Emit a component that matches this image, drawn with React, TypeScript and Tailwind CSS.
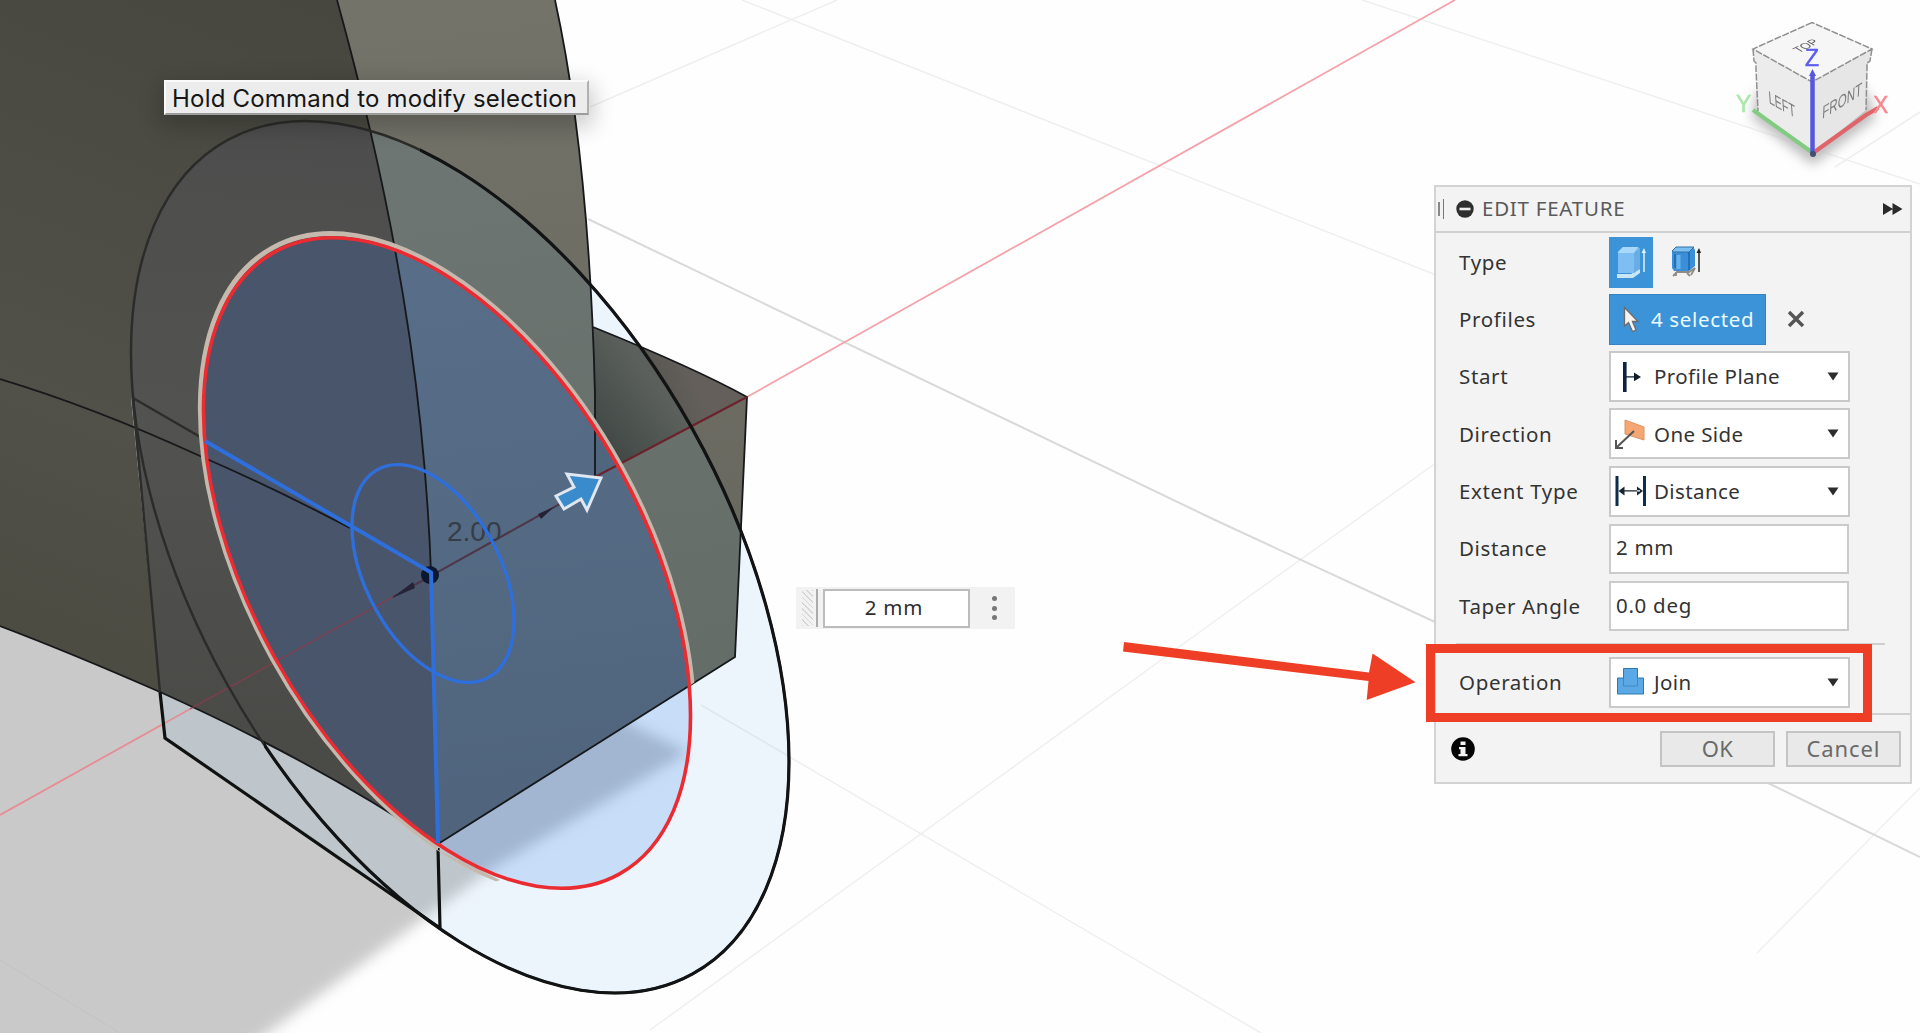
import React from "react";

type Palette = {
  ground: string;
  shadow: string;
  side: string;
  front: string;
  frontTop: string;
  box: string;
};

const plain: Palette = { ground: "none", shadow: "#c9c9c9", side: "url(#sideFill)", front: "#64645c", frontTop: "#737369", box: "url(#boxWarm)" };
const outer: Palette = { ground: "#edf5fc", shadow: "#bec6cb", side: "url(#sideOuter)", front: "#636b66", frontTop: "#6f7875", box: "url(#boxCool)" };
const inner: Palette = { ground: "#c7ddf8", shadow: "#a2b6d1", side: "#48556b", front: "#50657d", frontTop: "#5c718d", box: "#50667f" };

const SIDE = "M0 0H337C368 112 394 230 410 340C420 410 428 490 431 573L438 844C340 778 240 728 160 692C110 670 50 645 0 626Z";
const FRONT = "M337 0H555C578 105 591 240 595 393L595 477L747 397L735 657L438 844L431 573C428 490 420 410 410 340C394 230 368 112 337 0Z";
const BOX = "M593 327C640 346 700 371 747 397L595 477Z";
const OUTER_MATRIX = "matrix(329 204.5 0 385 460 557)";
const INNER_MATRIX = "matrix(243.5 153 0 287 447 563)";

function Solid({ p, id }: { p: Palette; id: string }) {
  return (
    <g>
      <linearGradient id={id} gradientUnits="userSpaceOnUse" x1="450" y1="0" x2="560" y2="800">
        <stop offset="0" stopColor={p.frontTop} />
        <stop offset="1" stopColor={p.front} />
      </linearGradient>
      <rect width="1920" height="1033" fill={p.ground} />
      <path d="M-60 560H400L630 724L688 752L496 866L416 924L258 1040L180 1100H-60Z" fill={p.shadow} filter="url(#soft)" />
      <path d={FRONT} fill={`url(#${id})`} />
      <path d={BOX} fill={p.box} />
      <path d={SIDE} fill={p.side} />
    </g>
  );
}

function Viewport() {
  return (
    <svg className="absolute inset-0 h-full w-full" viewBox="0 0 1920 1033" fill="none">
      <defs>
        <filter id="soft" x="-10%" y="-10%" width="120%" height="120%"><feGaussianBlur stdDeviation="7" /></filter>
        <linearGradient id="sideFill" gradientUnits="userSpaceOnUse" x1="300" y1="0" x2="60" y2="620">
          <stop offset="0" stopColor="#474740" /><stop offset="0.7" stopColor="#515149" /><stop offset="1" stopColor="#4c4c43" />
        </linearGradient>
        <linearGradient id="sideOuter" gradientUnits="userSpaceOnUse" x1="300" y1="120" x2="260" y2="740">
          <stop offset="0" stopColor="#4d4d4d" /><stop offset="0.5" stopColor="#525250" /><stop offset="1" stopColor="#4a4a47" />
        </linearGradient>
        <linearGradient id="boxWarm" gradientUnits="userSpaceOnUse" x1="595" y1="430" x2="700" y2="390">
          <stop offset="0" stopColor="#454a46" /><stop offset="1" stopColor="#645f5a" />
        </linearGradient>
        <linearGradient id="boxCool" gradientUnits="userSpaceOnUse" x1="595" y1="440" x2="660" y2="390">
          <stop offset="0" stopColor="#3f4744" /><stop offset="1" stopColor="#5b605c" />
        </linearGradient>
        <clipPath id="outerClip">
          <circle r="1" transform={OUTER_MATRIX} />
          <path d="M131 398L165 738L440 928L438 500Z" />
        </clipPath>
        <clipPath id="innerClip"><circle r="1" transform={INNER_MATRIX} /></clipPath>
        <clipPath id="bodyClip"><path d={SIDE} /><path d={FRONT} /><path d="M593 327L747 397L595 477ZM200 600H438V850L500 880L400 920L200 800Z" /></clipPath>
        <clipPath id="nearSide"><path d="M420 100H900V1033H264V742L420 842Z" /></clipPath>
      </defs>

      {/* ground grid */}
      <g stroke="#efefef" strokeWidth="1.5">
        <path d="M742 0L1436 275M1362 0L1920 184M837 0L590 107M701 705L1261 1033M650 1030L1244 600L1436 463M1835 167L1920 112M1920 788L1757 953" />
      </g>
      <path d="M588 219L1215 520L1435 622M1768 783L1920 857" stroke="#d9d9d9" strokeWidth="2" />
      <Solid p={plain} id="frontPlain" />
      <path d="M0 960L120 1033" stroke="#c2c2c2" strokeWidth="1" />
      <path d="M0 815L165 723M747 397L1455 0" stroke="#f4a3aa" strokeWidth="1.8" />
      <g clipPath="url(#outerClip)"><Solid p={outer} id="frontOuter" /></g>
      <g clipPath="url(#innerClip)"><Solid p={inner} id="frontInner" /></g>
      <path d="M701 705L790 757" stroke="#dfe7ee" strokeWidth="1.5" />

      {/* model edges */}
      <g stroke="#16181b" strokeWidth="1.8">
        <path d="M337 0C368 112 394 230 410 340C420 410 428 490 431 573" />
        <path d="M555 0C578 105 591 240 595 393L595 477M593 327C640 346 700 371 747 397L735 657L438 844" />
        <path d="M0 626C50 645 110 670 160 692C240 728 340 778 438 844" />
        <path d="M0 379C80 403 150 433 200 456C260 482 310 507 350 528" />
      </g>

      {/* axis through the solid */}
      <path d="M595 477L747 397" stroke="#6b232b" strokeWidth="2" />
      <path d="M0 815L190 709" stroke="#e08f96" strokeWidth="1.6" />
      <path d="M190 709L393 597" stroke="#8d3a4c" strokeOpacity="0.7" strokeWidth="1.6" />
      <path d="M393 597L601 481" stroke="#4e3547" strokeWidth="2" />
      <path d="M392 598L413 582L415 588ZM554 507L538 514L541 519Z" fill="#252238" />

      {/* sketch outlines */}
      <circle r="1" transform={OUTER_MATRIX} stroke="#2b2b29" strokeWidth="2.4" vectorEffect="non-scaling-stroke" />
      <g clipPath="url(#nearSide)">
        <circle r="1" transform={OUTER_MATRIX} stroke="#111314" strokeWidth="3.2" vectorEffect="non-scaling-stroke" />
      </g>
      <path d="M133 398L160 692M133 398L202 438" stroke="#2c2c2a" strokeWidth="2.4" />
      <path d="M160 692L165 738L440 928L438 848" stroke="#101212" strokeWidth="3.2" />
      <g clipPath="url(#bodyClip)">
        <circle r="1.013" transform={INNER_MATRIX} stroke="#c5b8ad" strokeWidth="5" vectorEffect="non-scaling-stroke" />
      </g>
      <circle r="1" transform={INNER_MATRIX} stroke="#ea2b31" strokeWidth="3.6" vectorEffect="non-scaling-stroke" />
      <text x="447" y="541" fontSize="28" fill="#343d49" className="font-['Liberation_Sans']">2.00</text>
      <circle cx="430" cy="575" r="9" fill="#0c1830" />
      <g stroke="#2f6fdc">
        <circle r="1" transform="matrix(81 47.5 0 98 433 573.5)" strokeWidth="3.4" vectorEffect="non-scaling-stroke" />
        <path d="M205 441L432 573" strokeWidth="4" />
        <path d="M431 572L438 843" strokeWidth="4" />
      </g>
      <path d="M601 478L587 510L581 499L564 509L556 496L574 487L567 474Z" fill="#3a8bcb" stroke="#dfe7f0" strokeWidth="3" />

      {/* callout arrow */}
      <path d="M1124 642L1369 672.5L1372.6 653.5L1415.5 682.3L1366.7 700L1368.5 681L1123 651.5Z" fill="#ee3f26" />
    </svg>
  );
}

function ViewCube() {
  return (
    <svg className="absolute left-[1730px] top-0 h-[180px] w-[170px]" viewBox="1730 0 170 180" fill="none">
      <defs>
        <filter id="haze" x="-30%" y="-30%" width="160%" height="160%"><feGaussianBlur stdDeviation="6" /></filter>
        <filter id="smooth" x="-10%" y="-10%" width="120%" height="120%"><feGaussianBlur stdDeviation="0.7" /></filter>
      </defs>
      <path d="M1752 118L1813 165L1876 118L1866 90H1758Z" fill="#bdbdbd" filter="url(#haze)" />
      <g filter="url(#smooth)">
        <path d="M1753 49L1754 62L1757 65L1758 111L1812 154V82Z" fill="#ececec" />
        <path d="M1872 49L1870 62L1867 65L1866 110L1812 154V82Z" fill="#e6e6e6" />
        <path d="M1812 22.5L1753 49L1812 82L1872 49Z" fill="#f6f6f6" />
        <path d="M1812 22.5L1753 49L1812 82L1872 49ZM1753 49L1754 61L1756 63V69L1758 111M1872 49L1870 61L1867 63V69L1866 110" stroke="#8f8f8f" strokeWidth="1.5" strokeDasharray="7 1.5" />
        <g className="font-['Liberation_Sans']" fill="#7c7c7c" fontSize="17">
          <text transform="matrix(.64 .36 .08 1.05 1769 103)">LEFT</text>
          <text transform="matrix(.68 -.42 -.05 1.05 1822 119)">FRONT</text>
          <text transform="matrix(.6 -.3 .6 .35 1799 53)" fill="#5e5e5e">TOP</text>
        </g>
        <path d="M1813 153L1866 115L1878 108" stroke="#e0656b" strokeWidth="4" />
        <path d="M1813 153L1753 110" stroke="#82cc82" strokeWidth="4" />
        <path d="M1812.5 154V74" stroke="#5656df" strokeWidth="4.5" />
        <path d="M1809 76L1812.5 69L1816 76Z" fill="#5656df" />
        <circle cx="1813" cy="154" r="3" fill="#45506a" />
        <g className="font-['Liberation_Sans']" fontSize="23" strokeWidth="0.5">
          <text x="1805" y="66" fill="#5c5cf0" stroke="#5c5cf0">Z</text>
          <text x="1736" y="112" fill="#a9e8a9" stroke="#a9e8a9">Y</text>
          <text x="1873" y="113" fill="#f58a8f" stroke="#f58a8f">X</text>
        </g>
      </g>
    </svg>
  );
}

function ExtrudeIcon({ thin }: { thin?: boolean }) {
  return (
    <svg className="h-[32px] w-[30px]" viewBox="0 0 30 32" fill="none">
      {thin ? (
        <>
          <path d="M2 30L6 26H18L24 22L20 29M5 26V30M16 27L19 30" stroke="#918b87" strokeWidth="1.8" />
          <path d="M1 5L5 1H22L24 4V20L18 25H3L1 22Z" fill="#3a8fd8" />
          <path d="M1 5L5 1H23L18 6H2Z" fill="#7cc0f1" stroke="#2f70a8" />
          <path d="M4 8V22M18 6V24" stroke="#1c67ab" strokeWidth="1.5" />
          <path d="M7.500 9V23" stroke="#68b1ec" strokeWidth="4" />
          <path d="M28 5V26" stroke="#222" strokeWidth="1.5" /><path d="M25.5 7L28 2L30 7Z" fill="#222" />
        </>
      ) : (
        <>
          <path d="M1 28H15L24 23V27L17 32H1Z" fill="#c8e6f5" />
          <path d="M2 6L7 1H22L24 3V22L18 27H2Z" fill="#7dbff2" />
          <path d="M2 6L7 1H22L18 7H2Z" fill="#a8d9fb" />
          <path d="M18 7L24 2V22L18 27Z" fill="#68ade6" />
          <path d="M28 5V26" stroke="#dff3ff" strokeWidth="1.5" /><path d="M25.5 7L28 2L30 7Z" fill="#dff3ff" />
        </>
      )}
    </svg>
  );
}

function StartIcon() {
  return (
    <svg className="h-[32px] w-[32px]" viewBox="0 0 32 32">
      <path d="M8 1h3.6v30H8z" fill="#0e2340" /><path d="M11 15.2h9v1.4h-9zM19 11.5l7 4.4-7 4.4z" fill="#111c2b" />
    </svg>
  );
}
function DirectionIcon() {
  return (
    <svg className="h-[32px] w-[32px]" viewBox="0 0 32 32" fill="none">
      <path d="M10 2L29 9V22L10 16Z" fill="#f4a673" stroke="#dd9260" />
      <path d="M19 13L2 29M1 22V30H8" stroke="#555" strokeWidth="2" />
    </svg>
  );
}
function ExtentIcon() {
  return (
    <svg className="h-[32px] w-[32px]" viewBox="0 0 32 32">
      <path d="M0.500 1h3v30h-3zM28 1h3v30h-3z" fill="#0e2f4b" />
      <path d="M7 15.200h18v1.400H7zM3.500 16l6-4.500v9zM28 16l-6-4.500v9z" fill="#1a2430" />
    </svg>
  );
}
function JoinIcon() {
  return (
    <svg className="h-[32px] w-[32px]" viewBox="0 0 32 32" fill="none">
      <path d="M8.500 2.500H22.500V12H28.500V28H2.500V12H8.500Z" fill="#5aa9e6" stroke="#2f78b2" />
      <path d="M8.500 12V20H22.500V12" stroke="#3b8ac6" />
    </svg>
  );
}

function Label({ children }: { children: React.ReactNode }) {
  return <div className="w-[150px] shrink-0 whitespace-nowrap tracking-[0.65px]">{children}</div>;
}

function Combo({ icon, text }: { icon: React.ReactNode; text: string }) {
  return (
    <div className="flex h-full w-[241px] items-center border-2 border-[#c9c9c9] bg-white pl-[4px] pr-[9px]">
      {icon}
      <span className="ml-[7px] flex-1 whitespace-nowrap tracking-[0.4px]">{text}</span>
      <svg className="h-[9px] w-[12px]" viewBox="0 0 12 9"><path d="M0.500 0.500h11L6 8.500z" fill="#2c2c2c" /></svg>
    </div>
  );
}

function Row({ label, children }: { label: string; children: React.ReactNode }) {
  return (
    <div className="flex h-[51px] items-center">
      <Label>{label}</Label>
      {children}
    </div>
  );
}

function Field({ text }: { text: string }) {
  return <div className="mt-px flex h-[50px] w-[240px] items-center border-2 border-[#cbcbcb] bg-white pb-[3px] pl-[5px] tracking-[0.7px]">{text}</div>;
}

function EditPanel() {
  return (
    <section className="absolute left-[1434px] top-[185px] flex h-[599px] w-[478px] flex-col border-2 border-[#d3d3d3] bg-[#f3f3f3] font-['Noto_Sans','Open_Sans',sans-serif] text-[20.5px] leading-none text-[#333]">
      <header className="flex h-[46px] shrink-0 items-center border-b-2 border-[#d0d0d0] pl-[2px] pr-[7px] text-[#5a5a5a]">
        <div className="flex h-[20px] w-[6px] items-center justify-between">
          <i className="h-[14px] w-[1.5px] bg-[#888]" /><i className="h-[20px] w-[1.5px] bg-[#777]" />
        </div>
        <svg className="ml-[12px] h-[18px] w-[18px]" viewBox="0 0 18 18"><circle cx="9" cy="9" r="8.700" fill="#2e2e2e" /><path d="M3.500 7.700h11v2.600h-11z" fill="#eee" /></svg>
        <h1 className="ml-[8px] flex-1 pb-[2px] whitespace-nowrap tracking-[0.75px]">EDIT FEATURE</h1>
        <svg className="h-[12px] w-[20px]" viewBox="0 0 20 12"><path d="M0 0l10 6-10 6zM9.500 0l10 6-10 6z" fill="#2a2a2a" /></svg>
      </header>
      <div className="flex flex-col gap-[6.3px] pl-[23px] pt-[3.5px]">
        <Row label="Type">
          <div className="flex h-[51px] w-[44px] items-center justify-center bg-[#3d93d8]"><ExtrudeIcon /></div>
          <div className="ml-[18px]"><ExtrudeIcon thin /></div>
        </Row>
        <Row label="Profiles">
          <div className="flex h-[51px] w-[157px] items-center border border-[#3483c4] bg-[#3d93d8] pl-[13px] text-[#e9fbff]">
            <svg className="h-[27px] w-[17px]" viewBox="0 0 17 27"><path d="M1.500 1.500V20L5.500 16.500L9.500 25.500L13 24L9.500 15.500H15Z" fill="#f7f3f0" stroke="#6d6a6b" strokeWidth="1.300" /></svg>
            <span className="ml-[11px] whitespace-nowrap tracking-[0.65px]">4 selected</span>
          </div>
          <svg className="ml-[21px] h-[18px] w-[18px]" viewBox="0 0 18 18"><path d="M2 2L16 16M16 2L2 16" stroke="#555" strokeWidth="3.400" /></svg>
        </Row>
        <Row label="Start"><Combo icon={<StartIcon />} text="Profile Plane" /></Row>
        <Row label="Direction"><Combo icon={<DirectionIcon />} text="One Side" /></Row>
        <Row label="Extent Type"><Combo icon={<ExtentIcon />} text="Distance" /></Row>
        <Row label="Distance"><Field text="2 mm" /></Row>
        <Row label="Taper Angle"><Field text="0.0 deg" /></Row>
      </div>
      <div className="ml-[20px] mr-[25px] mt-[12px] h-[2px] bg-[#cfcfcf]" />
      <div className="mt-[11.500px] pl-[23px]">
        <Row label="Operation"><Combo icon={<JoinIcon />} text="Join" /></Row>
      </div>
      <footer className="mt-[5px] flex flex-1 items-start border-t-2 border-[#d0d0d0] pl-[15px] pr-[9px] pt-[16px] text-[#6a6a6a]">
        <svg className="mt-[6px] h-[24px] w-[24px]" viewBox="0 0 24 24"><circle cx="12" cy="12" r="11.800" fill="#050505" /><path d="M9.500 4.500h5v3.500h-5zM8 10h6.500v7H16.500v2.300h-9V17h2v-4.700H8z" fill="#f2f2f2" /></svg>
        <button className="ml-auto h-[36px] w-[115px] border-2 border-[#c4c4c4] bg-[#e9e9e9] pb-[2px] text-[22px] leading-none tracking-[0.4px]">OK</button>
        <button className="ml-[11px] h-[36px] w-[115px] border-2 border-[#c4c4c4] bg-[#e9e9e9] pb-[2px] text-[22px] leading-none tracking-[0.9px]">Cancel</button>
      </footer>
    </section>
  );
}

export default function App() {
  return (
    <main className="relative h-[1033px] w-[1920px] overflow-hidden bg-[#fefefe]">
      <Viewport />
      <ViewCube />
      <div className="absolute left-[164px] top-[80px] flex h-[35px] w-[425px] items-center border-2 border-[#fafafa] border-b-[#9c9c9c] border-r-[#b0b0b0] bg-[#ececec] pl-[6px] pt-[3px] font-['Inter',sans-serif] text-[24px] leading-none tracking-[0.2px] whitespace-nowrap text-[#161616] shadow-[0_8px_22px_4px_rgba(0,0,0,0.2)]">
        Hold Command to modify selection
      </div>
      <div className="absolute left-[796px] top-[587px] flex h-[42px] w-[219px] items-center bg-[#f2f2f2]">
        <div className="ml-[6px] h-[36px] w-[11px] bg-[repeating-linear-gradient(45deg,#d6d6d6_0_1px,#f2f2f2_1px_4px)]" />
        <div className="ml-[3px] h-[38px] w-[1.500px] bg-[#aaa]" />
        <div className="ml-[5px] flex h-[39px] w-[147px] items-center justify-center border-2 border-[#bcbcbc] bg-white pr-[4px] pb-[2px] font-['Noto_Sans',sans-serif] text-[20.5px] tracking-[0.8px] text-[#2e2e2e]">2 mm</div>
        <div className="ml-[22px] flex flex-col gap-[4.500px]">
          <i className="h-[5px] w-[5px] rounded-full bg-[#777]" /><i className="h-[5px] w-[5px] rounded-full bg-[#777]" /><i className="h-[5px] w-[5px] rounded-full bg-[#777]" />
        </div>
      </div>
      <EditPanel />
      <div className="absolute left-[1426px] top-[644px] h-[78px] w-[446px] border-[9px] border-[#ee3f26]" />
    </main>
  );
}
